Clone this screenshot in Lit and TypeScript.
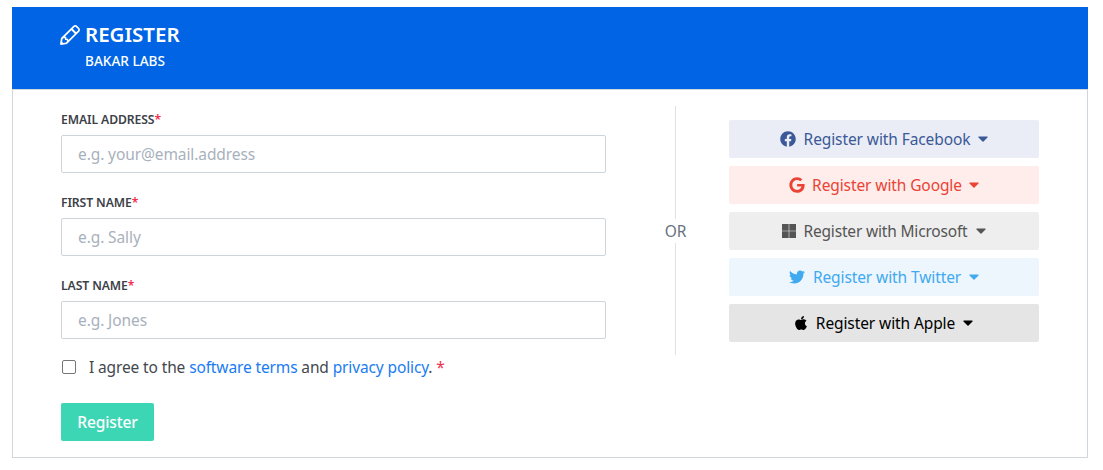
import { LitElement, html, css, svg } from "lit";
import { customElement } from "lit/decorators.js";

const ICONS = {
  facebook: { vb: "0 0 512 512", p: "M504 256C504 119 393 8 256 8S8 119 8 256c0 123.78 90.69 226.38 209.25 245V327.69h-63V256h63v-54.64c0-62.15 37-96.48 93.67-96.48 27.14 0 55.52 4.84 55.52 4.84v61h-31.28c-30.8 0-40.41 19.12-40.41 38.73V256h68.78l-11 71.69h-57.78V501C413.31 482.38 504 379.78 504 256z" },
  google: { vb: "0 0 488 512", p: "M488 261.8C488 403.3 391.1 504 248 504 110.8 504 0 393.2 0 256S110.8 8 248 8c66.8 0 123 24.5 166.3 64.9l-67.5 64.9C258.5 52.6 94.3 116.6 94.3 256c0 86.5 69.1 156.6 153.7 156.6 98.2 0 135-70.4 140.8-106.9H248v-85.3h236.1c2.3 12.7 3.9 24.9 3.9 41.4z" },
  microsoft: { vb: "0 0 448 512", p: "M0 32h214.6v214.6H0V32zm233.4 0H448v214.6H233.4V32zM0 265.4h214.6V480H0V265.4zm233.4 0H448V480H233.4V265.4z" },
  twitter: { vb: "0 0 512 512", p: "M459.37 151.716c.325 4.548.325 9.097.325 13.645 0 138.72-105.583 298.558-298.558 298.558-59.452 0-114.68-17.219-161.137-47.106 8.447.974 16.568 1.299 25.34 1.299 49.055 0 94.213-16.568 130.274-44.832-46.132-.975-84.792-31.188-98.112-72.772 6.498.974 12.995 1.624 19.818 1.624 9.421 0 18.843-1.3 27.614-3.573-48.081-9.747-84.143-51.98-84.143-102.985v-1.299c13.969 7.797 30.214 12.67 47.431 13.319-28.264-18.843-46.781-51.005-46.781-87.391 0-19.492 5.197-37.36 14.294-52.954 51.655 63.675 129.3 105.258 216.365 109.807-1.624-7.797-2.599-15.918-2.599-24.04 0-57.828 46.782-104.934 104.934-104.934 30.213 0 57.502 12.67 76.67 33.137 23.715-4.548 46.456-13.32 66.599-25.34-7.798 24.366-24.366 44.833-46.132 57.827 21.117-2.273 41.584-8.122 60.426-16.243-14.292 20.791-32.161 39.308-52.628 54.253z" },
  apple: { vb: "0 0 384 512", p: "M318.7 268.7c-.2-36.7 16.4-64.4 50-84.8-18.8-26.9-47.2-41.7-84.7-44.6-35.5-2.8-74.3 20.7-88.5 20.7-15 0-49.4-19.7-76.4-19.7C63.3 141.2 4 184.8 4 273.5q0 39.3 14.4 81.2c12.8 36.7 59 126.7 107.2 125.2 25.2-.6 43-17.9 75.8-17.9 31.8 0 48.3 17.9 76.4 17.9 48.6-.7 90.4-82.5 102.6-119.3-65.2-30.7-61.7-90-61.7-91.9zm-56.6-164.2c27.3-32.4 24.8-61.9 24-72.5-24.1 1.4-52 16.4-67.9 34.9-17.5 19.8-27.8 44.3-25.6 71.9 26.1 2 49.9-11.4 69.5-34.3z" },
  pencil: { vb: "0 0 512 512", p: "M491.609 73.625l-53.861-53.839c-26.378-26.379-69.076-26.379-95.46-.001L24.91 335.089.329 484.085c-2.675 16.215 11.368 30.261 27.587 27.587l148.995-24.582 315.326-317.378c26.33-26.331 26.581-68.879-.628-96.087zM120.644 302l170.259-169.155 88.251 88.251L210 391.355V350h-48v-48h-41.356zM82.132 458.132l-28.263-28.263 12.14-73.587L84.409 338H126v48h48v41.59l-18.282 18.401-73.586 12.141zm378.985-319.533l-.051.051-.051.051-48.03 48.344-88.03-88.03 48.344-48.03.05-.05.05-.05c9.147-9.146 23.978-9.259 33.236-.001l53.854 53.854c9.878 9.877 9.939 24.549.628 33.861z" },
} as const;

const icon = (k: keyof typeof ICONS, cls: string) => html`<svg class=${cls} viewBox=${ICONS[k].vb} aria-hidden="true">${svg`<path fill="currentColor" d=${ICONS[k].p}></path>`}</svg>`;

const caret = html`<svg class="caret" viewBox="0 0 10 6" aria-hidden="true"><path fill="currentColor" d="M1 .4h8c.6 0 .9.7.5 1.1L5.5 5.4c-.3.3-.7.3-1 0L.5 1.500C.1 1.100.4.400 1 .4z"></path></svg>`;

const PROVIDERS = [
  { key: "facebook", label: "Register with Facebook", cls: "fb" },
  { key: "google", label: "Register with Google", cls: "gg" },
  { key: "microsoft", label: "Register with Microsoft", cls: "ms" },
  { key: "twitter", label: "Register with Twitter", cls: "tw" },
  { key: "apple", label: "Register with Apple", cls: "ap" },
] as const;

const FIELDS = [
  { label: "EMAIL ADDRESS", ph: "e.g. your@email.address" },
  { label: "FIRST NAME", ph: "e.g. Sally" },
  { label: "LAST NAME", ph: "e.g. Jones" },
];

@customElement("app-root")
export class AppRoot extends LitElement {
  static styles = css`
    :host { display: block; font-family: "Noto Sans", "Open Sans", sans-serif; color: #363b42; padding: 7px 15px 11px 12px; }
    * { box-sizing: border-box; }
    .card { display: block; border: 1px solid #d0d6de; border-top: 0; height: 451px; }
    .head { background: #0064e4; margin: 0 -1px; height: 83px; border-bottom: 1px solid #d0d6de; padding: 15px 0 0 48px; color: #fff; }
    .title { display: flex; align-items: center; height: 26px; font-size: 20.5px; font-weight: 600; line-height: 26px; letter-spacing: 0; }
    .title span { padding-bottom: 2px; }
    .pencil { width: 20px; height: 20px; margin-right: 5px; }
    .sub { margin: 5px 0 0 25px; font-size: 13.6px; line-height: 16px; font-weight: 500; letter-spacing: 0; }
    .body { display: flex; align-items: flex-start; padding: 16px 0 0 48px; }
    .form { width: 545px; flex: none; padding-top: 7px; }
    .field { display: block; height: 83px; }
    .lab { display: block; height: 13px; font-size: 12.2px; line-height: 14px; font-weight: 600; color: #3c4148; margin-bottom: 9px; letter-spacing: -0.1px; white-space: nowrap; }
    .req { color: #f0304f; }
    .input { display: block; width: 100%; height: 38px; border: 1px solid #ced4dc; border-radius: 2px; padding: 0 16px; font: inherit; font-size: 15.5px; color: #363b42; background: #fff; outline: none; letter-spacing: -0.1px; }
    .input::placeholder { color: #a8b1bc; opacity: 1; }
    .agree { display: flex; align-items: center; height: 20px; margin-top: -5px; font-size: 15.5px; line-height: 20px; letter-spacing: -0.13px; color: #43484f; }
    .box { appearance: none; flex: none; width: 14px; height: 14px; margin: 0 13px 0 1px; border: 1px solid #767676; border-radius: 2px; background: #fff; }
    .agree a { color: #1a7cf2; text-decoration: none; }
    .agree span.sp { white-space: pre; }
    .submit { display: block; margin-top: 26px; width: 93px; height: 38px; border: 0; border-radius: 2px; background: #3dd6b5; color: #fff; font: inherit; font-size: 15.5px; font-weight: 500; letter-spacing: -0.1px; }
    .divider { flex: none; width: 1px; height: 249px; margin-left: 69px; background: #dfe1e4; display: flex; align-items: center; justify-content: center; }
    .or { flex: none; background: #fff; padding: 4px 0; width: 24px; text-align: center; font-size: 15.5px; line-height: 16px; color: #66727f; }
    .social { flex: none; width: 310px; margin: 14px 0 0 53px; display: flex; flex-direction: column; gap: 8px; }
    .sbtn { display: flex; align-items: center; justify-content: center; height: 38px; border: 0; border-radius: 2px; padding: 0; font: inherit; font-size: 15.5px; letter-spacing: -0.1px; }
    .ico { width: 16px; height: 16px; margin-right: 7.5px; }
    .caret { width: 10px; height: 6px; margin-left: 7.5px; }
    .fb { background: #eaedf5; color: #3b5998; }
    .gg { background: #feedeb; color: #ea4335; }
    .ms { background: #eeeeee; color: #555555; letter-spacing: -0.18px; padding-right: 1px; }
    .ms .ico { margin-right: 6px; }
    .ms .caret { margin-left: 8px; }
    .tw { background: #edf6fd; color: #41a9ef; }
    .ap { background: #e5e5e5; color: #000000; padding-right: 2px; }
    .ap .ico { margin-right: 7px; }
    .ap .caret { margin-left: 8px; }
  `;

  render() {
    return html`
      <div class="card">
        <header class="head">
          <div class="title">${icon("pencil", "pencil")}<span>REGISTER</span></div>
          <div class="sub">BAKAR LABS</div>
        </header>
        <div class="body">
          <form class="form">
            ${FIELDS.map((f) => html`
              <label class="field">
                <span class="lab">${f.label}<span class="req">*</span></span>
                <input class="input" placeholder=${f.ph} />
              </label>`)}
            <div class="agree">
              <input class="box" type="checkbox" />
              <span class="sp">I agree to the <a href="#">software terms</a> and <a href="#">privacy policy</a>. <span class="req">*</span></span>
            </div>
            <button class="submit" type="button">Register</button>
          </form>
          <div class="divider"><span class="or">OR</span></div>
          <div class="social">
            ${PROVIDERS.map((p) => html`<button class="sbtn ${p.cls}" type="button">${icon(p.key, "ico")}<span>${p.label}</span>${caret}</button>`)}
          </div>
        </div>
      </div>
    `;
  }
}
